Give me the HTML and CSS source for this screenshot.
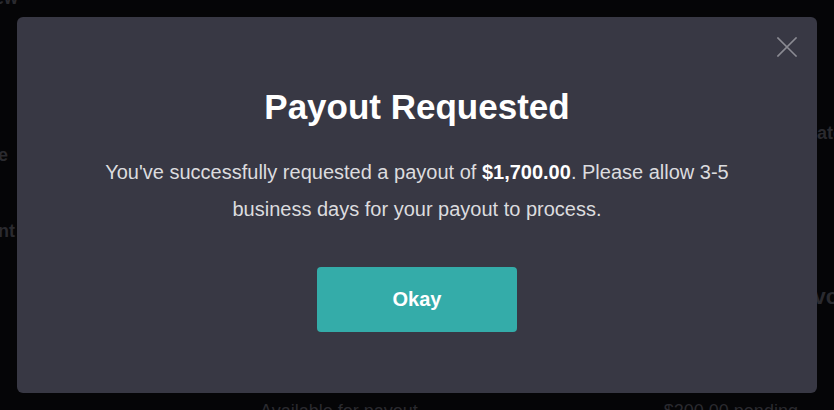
FILE: index.html
```html
<!DOCTYPE html>
<html lang="en">
<head>
<meta charset="utf-8">
<title>Payout Requested</title>
<link rel="stylesheet" href="styles.css">
</head>
<body>
<div class="page">
  <div class="row row-top">
    <div class="edge-left edge-18"><span class="bg-title">Overview</span></div>
  </div>
  <div class="row row-a">
    <div class="spacer"></div>
    <div class="edge-right edge-r-update"><span class="bg-label">Update</span></div>
  </div>
  <div class="row row-b">
    <div class="edge-left edge-8"><span class="bg-label">Balance</span></div>
  </div>
  <div class="row row-c">
    <div class="edge-left edge-15"><span class="bg-label">Account</span></div>
  </div>
  <div class="row row-d">
    <div class="spacer"></div>
    <div class="edge-right edge-r-invoices"><span class="bg-big">Invoices</span></div>
  </div>
  <div class="row row-e">
    <span class="bg-foot">Available for payout</span>
    <span class="bg-foot bg-foot-right">$200.00 pending</span>
  </div>
</div>

<div class="modal" role="dialog" aria-labelledby="modal-title">
  <button class="close" type="button" aria-label="Close">
    <svg width="20" height="20" viewBox="0 0 20 20" aria-hidden="true">
      <path d="M1 1 L19 19 M19 1 L1 19" stroke="#8b8b93" stroke-width="1.6" fill="none" stroke-linecap="square"/>
    </svg>
  </button>
  <h1 id="modal-title" class="title">Payout Requested</h1>
  <p class="message">You've successfully requested a payout of <strong>$1,700.00</strong>. Please allow 3-5 business days for your payout to process.</p>
  <button class="okay" type="button">Okay</button>
</div>
</body>
</html>
```

FILE: styles.css
```css
* { box-sizing: border-box; }

html, body {
  margin: 0;
  padding: 0;
  width: 834px;
  height: 410px;
  overflow: hidden;
  background: #050507;
  font-family: "Liberation Sans", Arial, Helvetica, sans-serif;
}

/* dimmed page behind the overlay */
.page {
  width: 834px;
  height: 410px;
  overflow: hidden;
  display: flex;
  flex-direction: column;
  color: #2a2a2f;
}

.row {
  display: flex;
  align-items: center;
  flex: 0 0 auto;
}

.edge-left {
  display: flex;
  justify-content: flex-end;
  white-space: nowrap;
}

.edge-18 { width: 18px; }
.edge-8 { width: 8px; }
.edge-15 { width: 15px; }

.edge-right {
  flex: 0 0 auto;
  white-space: nowrap;
}

.edge-r-update { width: 52px; }
.edge-r-invoices { width: 40px; }

.spacer { flex: 1; }

.row-top { height: 10px; margin-top: -7px; }
.row-a { height: 30px; margin-top: 115px; }
.row-b { height: 24px; margin-top: -5px; }
.row-c { height: 24px; margin-top: 52px; }
.row-d { height: 30px; margin-top: 39px; }
.row-e { height: 22px; margin-top: 88px; padding-left: 260px; }

.bg-title { font-size: 18px; font-weight: bold; }
.bg-label { font-size: 18px; font-weight: bold; }
.bg-big { font-size: 22px; font-weight: bold; }
.bg-foot { font-size: 18px; }
.bg-foot-right { margin-left: 246px; }

/* modal */
.modal {
  position: absolute;
  left: 17px;
  top: 17px;
  width: 800px;
  height: 376px;
  background: #383844;
  border-radius: 6px;
  padding: 69px 80px 0;
  display: flex;
  flex-direction: column;
  align-items: center;
  text-align: center;
}

.close {
  position: absolute;
  top: 20px;
  right: 20px;
  width: 20px;
  height: 20px;
  padding: 0;
  border: 0;
  background: none;
  display: flex;
}

.title {
  margin: 0;
  font-size: 35px;
  line-height: 42px;
  font-weight: bold;
  color: #ffffff;
}

.message {
  margin: 26px 0 0;
  font-size: 20px;
  line-height: 37px;
  color: #dcdcdf;
}

.message strong {
  color: #ffffff;
  font-weight: bold;
}

.okay {
  margin-top: 39px;
  width: 200px;
  height: 65px;
  border: 0;
  border-radius: 4px;
  background: #34aca9;
  color: #ffffff;
  font-family: "Liberation Sans", Arial, Helvetica, sans-serif;
  font-size: 20px;
  font-weight: bold;
}
```
